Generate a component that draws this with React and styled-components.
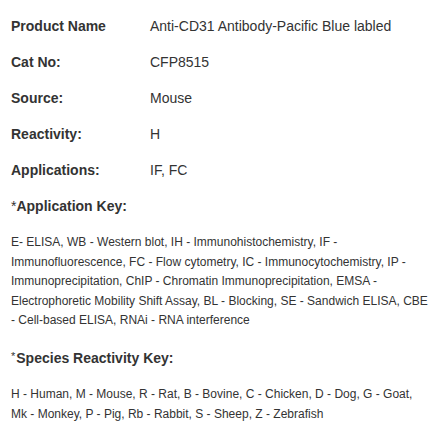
import styled, { createGlobalStyle } from "styled-components";

const GlobalStyle = createGlobalStyle`
  body {
    margin: 0;
    background: #fff;
    font-family: "Liberation Sans", Arial, sans-serif;
    color: #333;
  }
`;

const Wrapper = styled.div`
  padding: 8px 11px 0 11px;
  width: 420px;
`;

const Row = styled.div`
  display: grid;
  grid-template-columns: 139px 1fr;
  align-items: center;
  height: 36px;
  font-size: 14px;
`;

const Label = styled.div`
  font-weight: bold;
  color: #333;
`;

const Value = styled.div`
  color: #333;
`;

const KeyTitle = styled.div`
  display: flex;
  align-items: center;
  height: 36px;
  font-size: 14px;
  font-weight: bold;
  margin-top: ${props => props.gap || 0}px;
`;

const Star = styled.span`
  font-weight: normal;
  font-size: ${props => props.small ? "11px" : "14px"};
  margin-right: ${props => props.small ? "1px" : "0"};
  position: relative;
  top: ${props => props.small ? "-2px" : "0"};
`;

const KeyText = styled.p`
  margin: 9px 0 0 0;
  font-size: 12px;
  line-height: 19.6px;
  color: #333;
`;

const rows = [
  ["Product Name", "Anti-CD31 Antibody-Pacific Blue labled"],
  ["Cat No:", "CFP8515"],
  ["Source:", "Mouse"],
  ["Reactivity:", "H"],
  ["Applications:", "IF, FC"],
];

export default function App() {
  return (
    <>
      <GlobalStyle />
      <Wrapper>
        {rows.map(([label, value]) => (
          <Row key={label}>
            <Label>{label}</Label>
            <Value>{value}</Value>
          </Row>
        ))}
        <KeyTitle>
          <Star>*</Star>Application Key:
        </KeyTitle>
        <KeyText>
          E- ELISA, WB - Western blot, IH - Immunohistochemistry, IF - Immunofluorescence, FC - Flow cytometry, IC - Immunocytochemistry, IP - Immunoprecipitation, ChIP - Chromatin Immunoprecipitation, EMSA - Electrophoretic Mobility Shift Assay, BL - Blocking, SE - Sandwich ELISA, CBE - Cell-based ELISA, RNAi - RNA interference
        </KeyText>
        <KeyTitle gap={9}>
          <Star small>*</Star>Species Reactivity Key:
        </KeyTitle>
        <KeyText>
          H - Human, M - Mouse, R - Rat, B - Bovine, C - Chicken, D - Dog, G - Goat, Mk - Monkey, P - Pig, Rb - Rabbit, S - Sheep, Z - Zebrafish
        </KeyText>
      </Wrapper>
    </>
  );
}
